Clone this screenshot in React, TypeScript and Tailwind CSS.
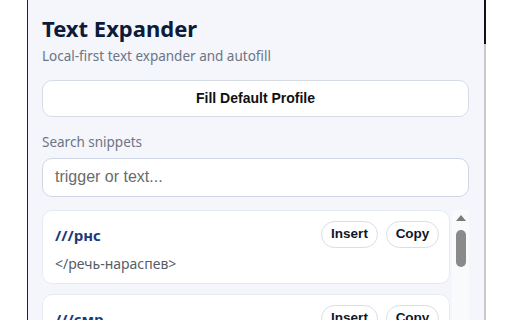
import * as React from 'react'

type Snippet = { trigger: string; body: string }

const snippets: Snippet[] = [
  { trigger: '///рнс', body: '</речь-нараспев>' },
  { trigger: '///смр', body: '</смирение>' },
  { trigger: '///адр', body: 'ул. Ленина, 1' },
]

const ui = { fontFamily: '"Noto Sans", "Open Sans", sans-serif' }
const arial = { fontFamily: '"Liberation Sans", Arial, sans-serif' }

function SnippetCard({ s }: { s: Snippet }) {
  return (
    <article className="shrink-0 rounded-[10px] border border-[#e6ebf3] bg-white pl-3 pr-[10px] pt-[10px] pb-[9px]">
      <div className="flex items-center justify-between">
        <div className="pt-[2px] text-[15px] font-bold text-[#1c3a7a]">{s.trigger}</div>
        <div className="flex gap-2" style={arial}>
          <button className="h-[27px] w-[57px] rounded-full border border-[#d8dee8] text-[13.5px] font-semibold text-[#0f172a]">
            Insert
          </button>
          <button className="h-[27px] w-[53px] rounded-full border border-[#d8dee8] text-[13.5px] font-semibold text-[#0f172a]">
            Copy
          </button>
        </div>
      </div>
      <div className="mt-[6px] text-[14px] leading-[20px] text-[#575d68]">{s.body}</div>
    </article>
  )
}

function ScrollBar() {
  return (
    <div className="ml-[2px] flex w-[17px] shrink-0 flex-col items-center bg-[#f9fafc] pt-[5px]">
      <svg width="12" height="7" viewBox="0 0 12 7">
        <path d="M6 0 L11 6 L1 6 Z" fill="#7a7a7a" />
      </svg>
      <div className="mt-[8px] h-[37px] w-[10px] rounded-full bg-[#8a8a8a]" />
    </div>
  )
}

export default function App() {
  return (
    <div className="flex h-[320px] w-[512px] overflow-hidden bg-white">
      <div className="ml-[27px] h-full w-[1px] bg-[#222]" />
      <div className="flex h-full w-[456px] flex-col bg-[#f4f6fb] pl-[14px] pr-[15px] pt-[13px]" style={ui}>
        <h1 className="text-[22px] leading-[30px] font-bold text-[#0d1b3a]">Text Expander</h1>
        <p className="mt-[3px] text-[13.5px] text-[#6b7585]">Local-first text expander and autofill</p>

        <button
          className="mt-[14px] h-[37px] w-full shrink-0 rounded-[10px] border border-[#d6dce6] bg-white text-[14px] font-bold text-[#111]"
          style={arial}
        >
          Fill Default Profile
        </button>

        <label className="mt-[15px] text-[13.5px] text-[#6b7585]">Search snippets</label>
        <input
          className="mt-[5px] h-[39px] w-full shrink-0 rounded-[10px] border border-[#cfd7e6] bg-white px-3 text-[16px] text-[#333] placeholder:text-[#6b6b6b] outline-none"
          style={arial}
          placeholder="trigger or text..."
        />

        <div className="mt-[13px] flex min-h-0 flex-1">
          <div className="flex min-w-0 flex-1 flex-col gap-[10px] overflow-hidden">
            {snippets.map((s) => (
              <SnippetCard key={s.trigger} s={s} />
            ))}
          </div>
          <ScrollBar />
        </div>
      </div>
      <div className="flex h-full w-[2px] flex-col">
        <div className="h-[44px] bg-[#111]" />
        <div className="flex-1 bg-[#c9c9c9]" />
      </div>
    </div>
  )
}
